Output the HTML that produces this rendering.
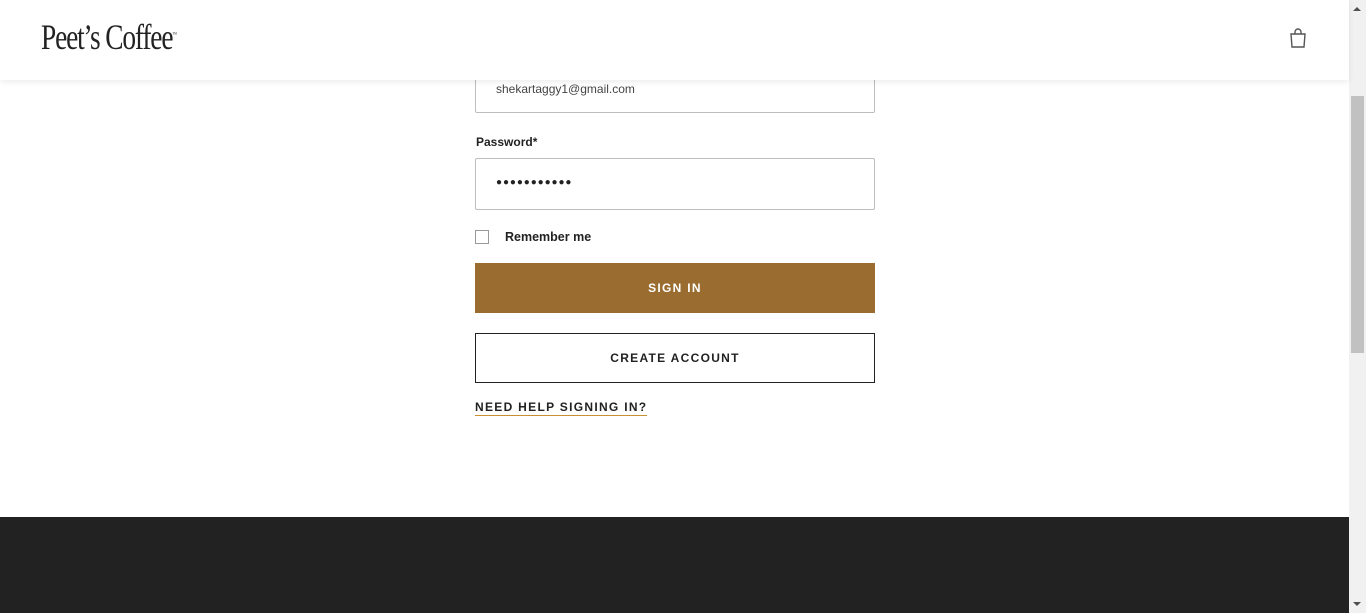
<!DOCTYPE html>
<html><head><meta charset="utf-8"><style>
*{box-sizing:border-box;margin:0;padding:0}
body{width:1366px;height:613px;overflow:hidden;background:#fff;font-family:"Liberation Sans",sans-serif;position:relative}
.hdr{position:absolute;left:0;top:0;width:1349px;height:80px;background:#fff;box-shadow:0 2px 6px rgba(0,0,0,.08);z-index:2}
.logo{position:absolute;left:41px;top:16px;font-family:"Liberation Serif",serif;font-size:36px;color:#222;letter-spacing:-1.5px;transform:scaleX(.76);transform-origin:left}
.logo sup{font-size:6px}
.bag{position:absolute;left:1289px;top:28px}
.inp{position:absolute;left:475px;width:400px;border:1px solid #bdbdbd;border-radius:2px;background:#fff}
.sb{position:absolute;left:1349px;top:0;width:17px;height:613px;background:#f1f1f1}
.th{position:absolute;left:1351px;top:96px;width:13px;height:257px;background:#c1c1c1}
.foot{position:absolute;left:0;top:517px;width:1349px;height:96px;background:#222}
.lbl{position:absolute;font-size:12px;font-weight:bold;color:#222}
.btn{position:absolute;left:475px;width:400px;height:50px;display:flex;align-items:center;justify-content:center;font-size:12px;font-weight:bold;letter-spacing:1.3px}
</style></head><body>
<div class="hdr">
<div class="logo">Peet’s Coffee<sup>™</sup></div>
<svg class="bag" width="18" height="20" viewBox="0 0 18 20"><path d="M2 6h14l-1 13H3z M6 6V4a3 3 0 0 1 6 0v2" fill="none" stroke="#555" stroke-width="1.4"/></svg>
</div>
<div class="inp" style="top:62px;height:51px"><span style="position:absolute;left:20px;top:19px;font-size:12px;color:#444">shekartaggy1@gmail.com</span></div>
<div class="lbl" style="left:476px;top:135px">Password*</div>
<div class="inp" style="top:158px;height:52px"><span style="position:absolute;left:20px;top:18px;font-size:10px;color:#222;letter-spacing:0.9px">●●●●●●●●●●●</span></div>
<div style="position:absolute;left:475px;top:230px;width:14px;height:14px;border:1px solid #999"></div>
<div class="lbl" style="left:505px;top:230px;font-size:12.5px">Remember me</div>
<div class="btn" style="top:263px;background:#9a6c2f;color:#fff">SIGN IN</div>
<div class="btn" style="top:333px;border:1px solid #222;color:#222">CREATE ACCOUNT</div>
<div class="lbl" style="left:475px;top:400px;letter-spacing:1.3px;border-bottom:1px solid #c8902e;padding-bottom:1px">NEED HELP SIGNING IN?</div>
<div class="foot"></div>
<div class="sb"></div><div class="th"></div>
<div style="position:absolute;left:1353px;top:7px;border:4px solid transparent;border-bottom:4px solid #505050;border-top:0"></div>
<div style="position:absolute;left:1353px;top:602px;border:4px solid transparent;border-top:4px solid #505050;border-bottom:0"></div>
</body></html>
